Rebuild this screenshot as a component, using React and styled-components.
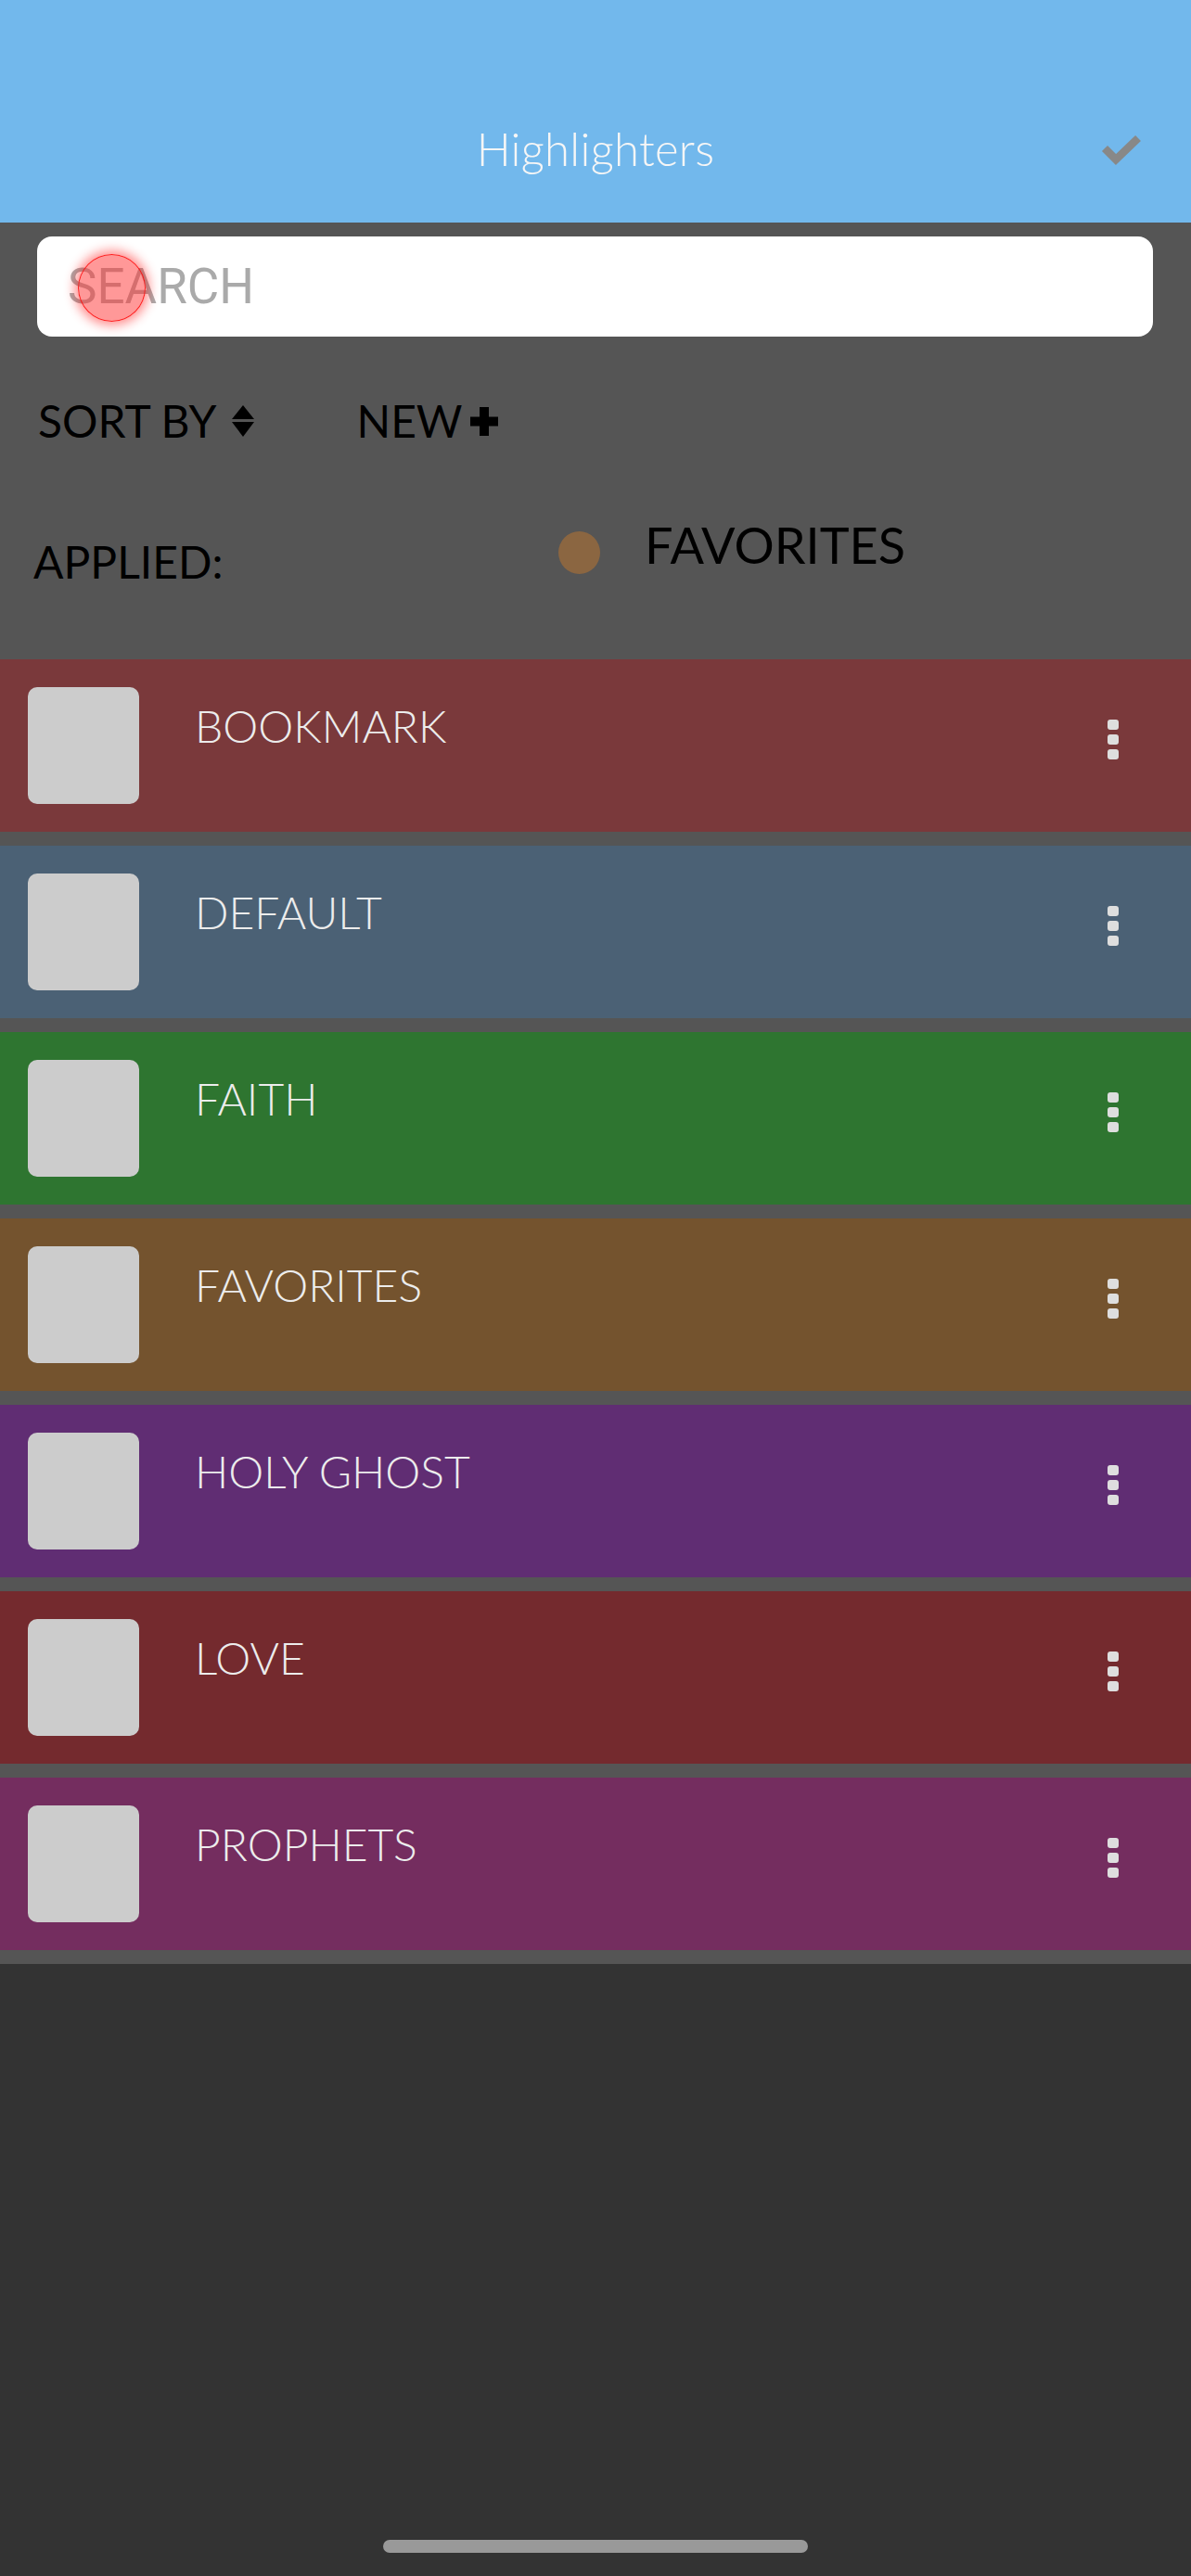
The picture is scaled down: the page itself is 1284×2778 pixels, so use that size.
import React from 'react';
import styled, { createGlobalStyle } from 'styled-components';

const GlobalStyle = createGlobalStyle`
  html, body {
    margin: 0;
    padding: 0;
    background: #333333;
  }
  * {
    box-sizing: border-box;
  }
`;

const highlighters = [
  { name: 'BOOKMARK', color: '#7a393b' },
  { name: 'DEFAULT', color: '#4b6175' },
  { name: 'FAITH', color: '#2e7530' },
  { name: 'FAVORITES', color: '#74532e' },
  { name: 'HOLY GHOST', color: '#602d73' },
  { name: 'LOVE', color: '#742a2e' },
  { name: 'PROPHETS', color: '#742d5f' },
];

const Screen = styled.div`
  width: 1284px;
  min-height: 2778px;
  display: flex;
  flex-direction: column;
  background: #333333;
  font-family: Lato, "Liberation Sans", sans-serif;
`;

const Header = styled.header`
  height: 240px;
  background: #72b8ec;
  display: grid;
  grid-template-columns: 1fr auto 1fr;
  align-items: start;
  padding-top: 131px;
`;

const Title = styled.h1`
  grid-column: 2;
  margin: 0;
  font-size: 49px;
  font-weight: 300;
  line-height: 1.2;
  color: #f6f6f6;
  letter-spacing: 0.3px;
`;

const DoneButton = styled.div`
  grid-column: 3;
  justify-self: end;
  margin: 13px 52px 0 0;
  display: flex;
`;

const Panel = styled.section`
  background: #555555;
  padding-top: 15px;
`;

const SearchBox = styled.div`
  position: relative;
  margin: 0 41px 0 40px;
  height: 108px;
  background: #ffffff;
  border-radius: 16px;
  display: flex;
  align-items: center;
  padding-left: 33px;
  font-family: Roboto, "Liberation Sans", sans-serif;
  font-size: 53px;
  color: #aaaaaa;
`;

const TouchMark = styled.span`
  position: absolute;
  left: 44px;
  top: 19px;
  width: 73px;
  height: 73px;
  border-radius: 50%;
  background: rgba(255, 50, 50, 0.5);
  border: 1px solid rgba(255, 0, 0, 0.8);
  box-shadow: 0 0 12px 4px rgba(255, 0, 0, 0.45);
`;

const Toolbar = styled.div`
  display: flex;
  align-items: center;
  margin-top: 62px;
  padding-left: 41px;
  height: 58px;
`;

const ToolButton = styled.div`
  display: flex;
  align-items: center;
  gap: ${(p) => p.$gap}px;
  margin-right: ${(p) => p.$after}px;
  font-size: 48px;
  line-height: 1.2;
  color: #000000;
`;

const AppliedRow = styled.div`
  display: flex;
  align-items: flex-start;
  padding-left: 36px;
  margin-top: 73px;
  height: 155px;
`;

const AppliedLabel = styled.div`
  margin-top: 21px;
  width: 566px;
  font-size: 48px;
  line-height: 1.2;
  color: #000000;
`;

const AppliedChip = styled.div`
  display: flex;
  align-items: flex-start;
  gap: 48px;
`;

const Dot = styled.span`
  width: 45px;
  height: 46px;
  margin-top: 17px;
  border-radius: 50%;
  background: ${(p) => p.$color};
`;

const ChipText = styled.span`
  font-size: 54px;
  line-height: 1.2;
  color: #000000;
`;

const List = styled.ul`
  list-style: none;
  margin: 0;
  padding: 0;
`;

const Row = styled.li`
  height: 186px;
  margin-bottom: 15px;
  background: ${(p) => p.$color};
  display: flex;
  align-items: flex-start;
  padding: 30px 78px 0 30px;
`;

const Checkbox = styled.span`
  flex: none;
  width: 120px;
  height: 126px;
  border-radius: 10px;
  background: #cccccc;
`;

const RowName = styled.span`
  flex: 1;
  margin: 13px 0 0 60px;
  font-size: 48px;
  font-weight: 300;
  line-height: 1.2;
  color: #ececec;
`;

const MoreButton = styled.span`
  display: flex;
  flex-direction: column;
  gap: 5px;
  margin-top: 35px;
`;

const MoreDot = styled.span`
  width: 12px;
  height: 11px;
  border-radius: 3px;
  background: #dedede;
`;

const Bottom = styled.div`
  flex: 1;
  display: flex;
  align-items: flex-end;
  justify-content: center;
  padding-bottom: 25px;
`;

const HomeIndicator = styled.span`
  width: 458px;
  height: 14px;
  border-radius: 7px;
  background: #999999;
`;

function CheckIcon() {
  return (
    <svg width="46" height="36" viewBox="0 0 46 36">
      <polyline points="5,16 17,28 41,5" fill="none" stroke="#888888" strokeWidth="8.5" />
    </svg>
  );
}

function SortIcon() {
  return (
    <svg width="24" height="34" viewBox="0 0 24 34">
      <path d="M12 0 L24 15 L0 15 Z" fill="#000" />
      <path d="M0 18 L24 18 L12 34 Z" fill="#000" />
    </svg>
  );
}

function PlusIcon() {
  return (
    <svg width="30" height="31" viewBox="0 0 30 31">
      <rect x="10" y="0" width="10" height="31" fill="#000" />
      <rect x="0" y="10.5" width="30" height="10" fill="#000" />
    </svg>
  );
}

export default function App() {
  return (
    <Screen>
      <GlobalStyle />
      <Header>
        <Title>Highlighters</Title>
        <DoneButton>
          <CheckIcon />
        </DoneButton>
      </Header>

      <Panel>
        <SearchBox>
          SEARCH
          <TouchMark />
        </SearchBox>

        <Toolbar>
          <ToolButton $gap={17} $after={110}>
            SORT BY <SortIcon />
          </ToolButton>
          <ToolButton $gap={8} $after={0}>
            NEW <PlusIcon />
          </ToolButton>
        </Toolbar>

        <AppliedRow>
          <AppliedLabel>APPLIED:</AppliedLabel>
          <AppliedChip>
            <Dot $color="#8b6641" />
            <ChipText>FAVORITES</ChipText>
          </AppliedChip>
        </AppliedRow>

        <List>
          {highlighters.map((h) => (
            <Row key={h.name} $color={h.color}>
              <Checkbox />
              <RowName>{h.name}</RowName>
              <MoreButton>
                <MoreDot />
                <MoreDot />
                <MoreDot />
              </MoreButton>
            </Row>
          ))}
        </List>
      </Panel>

      <Bottom>
        <HomeIndicator />
      </Bottom>
    </Screen>
  );
}
